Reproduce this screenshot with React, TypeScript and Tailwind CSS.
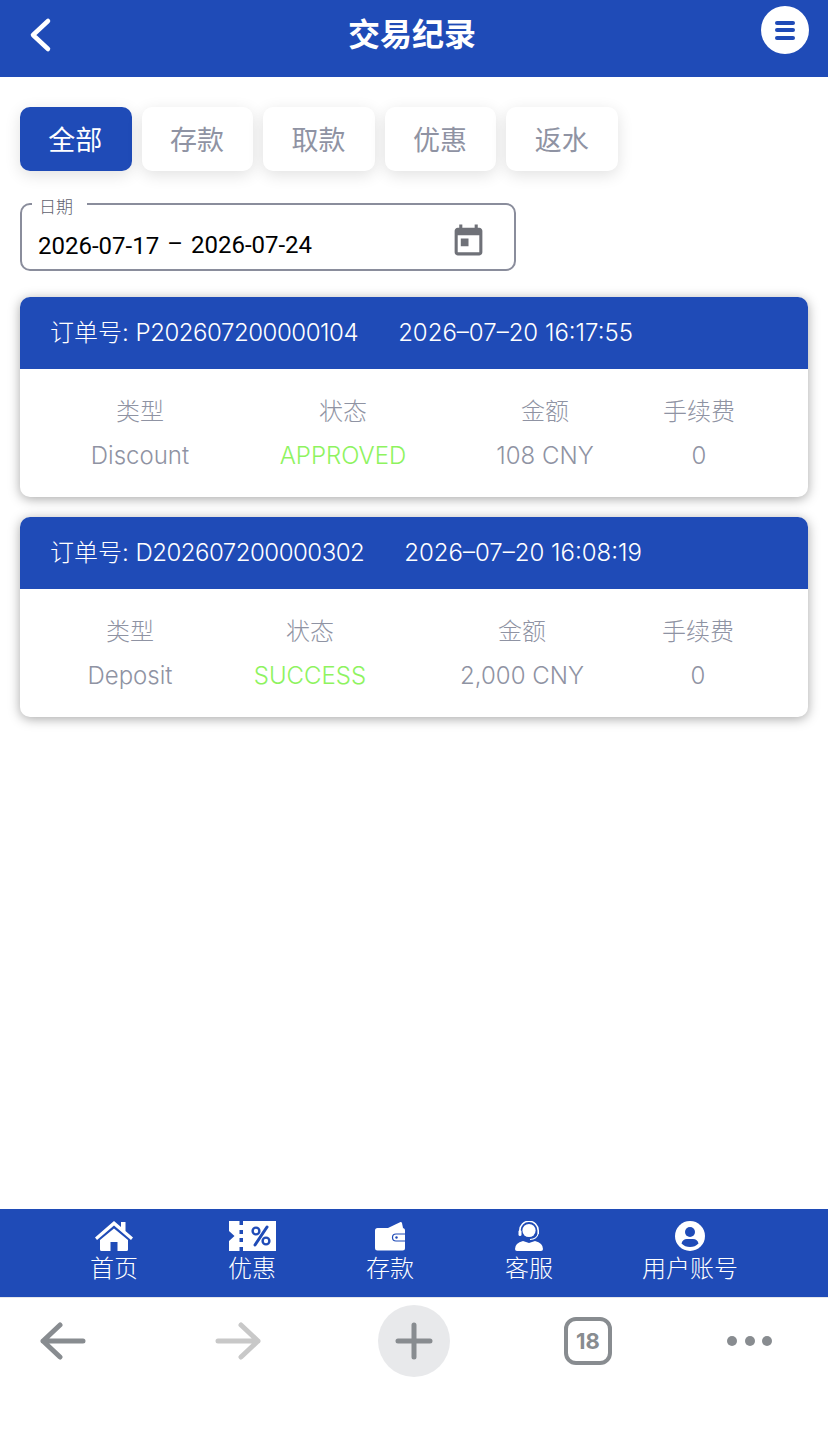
import React from 'react';

const font = "font-['Inter','Noto_Sans_CJK_SC',sans-serif]";

const tabs = ['全部', '存款', '取款', '优惠', '返水'];

const orders = [
  {
    id: 'P202607200000104',
    time: '2026–07–20 16:17:55',
    idClass: 'tracking-[-0.45px]',
    cols: 'grid-cols-[180px_226px_178px_130px]',
    type: 'Discount',
    status: 'APPROVED',
    amount: '108 CNY',
    fee: '0',
  },
  {
    id: 'D202607200000302',
    time: '2026–07–20 16:08:19',
    idClass: 'tracking-[-0.5px]',
    cols: 'grid-cols-[160px_200px_224px_128px]',
    type: 'Deposit',
    status: 'SUCCESS',
    amount: '2,000 CNY',
    fee: '0',
  },
];

const HomeIcon = () => (
  <svg width="38" height="30" viewBox="0 0 38 30" fill="white">
    <path d="M19 0 L26 6 V1 H30.5 V10 L38 16.5 L36 19 L19 4.6 L2 19 L0 16.5 Z" />
    <path d="M19 7.5 L33 19 V28.5 A1.5 1.5 0 0 1 31.5 30 H22.5 V21 H15.5 V30 H6.5 A1.5 1.5 0 0 1 5 28.5 V19 Z" />
  </svg>
);

const TicketIcon = () => (
  <svg width="47" height="30" viewBox="0 0 47 30">
    <path
      fill="white"
      d="M0 0 H10.5 V4 H14 V0 H47 V30 H14 V26 H10.5 V30 H0 V20 L5.5 15 L0 10 Z"
    />
    <rect x="10.5" y="9" width="3.5" height="4" fill="#1f4bb7" />
    <rect x="10.5" y="17" width="3.5" height="4" fill="#1f4bb7" />
    <circle cx="27" cy="10" r="3.4" fill="none" stroke="#1f4bb7" strokeWidth="2.4" />
    <circle cx="37" cy="20" r="3.4" fill="none" stroke="#1f4bb7" strokeWidth="2.4" />
    <path d="M38 6 L26 24" stroke="#1f4bb7" strokeWidth="3" strokeLinecap="round" />
  </svg>
);

const WalletIcon = () => (
  <svg width="30" height="30" viewBox="0 0 30 30" fill="white">
    <path d="M13 7 L25.5 1 Q26.5 0.8 27 2 L28 7 Z" />
    <rect x="0" y="7" width="30" height="22.5" rx="2.5" />
    <path d="M30 13 H21 A3.5 3.5 0 0 0 21 20 H30" fill="white" stroke="#1f4bb7" strokeWidth="1.2" />
    <circle cx="21.5" cy="16.5" r="1.2" fill="#1f4bb7" />
  </svg>
);

const HeadsetIcon = () => (
  <svg width="28" height="30" viewBox="0 0 28 30" fill="none">
    <circle cx="14" cy="9.5" r="6.6" fill="white" />
    <path d="M4.8 13 V9.5 A9.2 9.2 0 0 1 23.2 9.5 V13" stroke="white" strokeWidth="1.6" />
    <rect x="3.5" y="9" width="3" height="6" rx="1.5" fill="white" />
    <path d="M23 13 Q22 18 15 18.5" stroke="white" strokeWidth="1.2" />
    <path fill="white" d="M0 28 Q0 22 8 20 L14 22 L20 20 Q28 22 28 28 Q28 30 26 30 H2 Q0 30 0 28 Z" />
  </svg>
);

const UserIcon = () => (
  <svg width="30" height="30" viewBox="0 0 30 30">
    <circle cx="15" cy="15" r="15" fill="white" />
    <circle cx="15" cy="11" r="5" fill="#1f4bb7" />
    <path fill="#1f4bb7" d="M6.5 22.5 Q7.5 18 12 18 H18 Q22.5 18 23.5 22.5 Q20 26 15 26 Q10 26 6.5 22.5 Z" />
  </svg>
);

const navItems = [
  { label: '首页', icon: <HomeIcon />, cls: 'w-[94px] ml-[67px]' },
  { label: '优惠', icon: <TicketIcon />, cls: 'w-[94px] ml-[44px]' },
  { label: '存款', icon: <WalletIcon />, cls: 'w-[94px] ml-[44px]' },
  { label: '客服', icon: <HeadsetIcon />, cls: 'w-[94px] ml-[45px]' },
  { label: '用户账号', icon: <UserIcon />, cls: 'w-[96px] ml-[66px]' },
];

const Arrow = ({ flip, color }: { flip?: boolean; color: string }) => (
  <svg width="46" height="38" viewBox="0 0 46 38" fill="none" className={flip ? 'rotate-180' : ''}>
    <path d="M20 3 L3 19 L20 35 M3 19 H43" stroke={color} strokeWidth="5" strokeLinecap="round" strokeLinejoin="round" />
  </svg>
);

export default function App() {
  return (
    <div className={`${font} flex h-[1453px] w-[828px] flex-col overflow-hidden bg-white`}>
      {/* header */}
      <div className="relative flex h-[77px] shrink-0 items-center justify-center bg-[#1f4bb7] pb-[7px] pr-[4px]">
        <svg width="24" height="36" viewBox="0 0 24 36" fill="none" className="absolute left-[29px] top-[17px]">
          <path d="M19 4 L4 18 L19 32" stroke="white" strokeWidth="4.5" strokeLinecap="round" strokeLinejoin="round" />
        </svg>
        <span className="text-[32px] font-semibold leading-[40px] text-white">交易纪录</span>
        <div className="absolute left-[761px] top-[6px] flex h-[48px] w-[48px] flex-col items-center justify-center gap-[3.5px] rounded-full bg-white">
          <span className="h-[4px] w-[20px] rounded-full bg-[#1f4bb7]" />
          <span className="h-[4px] w-[20px] rounded-full bg-[#1f4bb7]" />
          <span className="h-[4px] w-[20px] rounded-full bg-[#1f4bb7]" />
        </div>
      </div>

      {/* content */}
      <div className="flex-1 px-[20px] pt-[30px]">
        <div className="flex gap-[10px]">
          {tabs.map((t, i) => (
            <div
              key={t}
              className={`flex h-[64px] w-[111.6px] items-center justify-center rounded-[10px] pt-[4px] pr-[1px] text-[27px] shadow-[0_4px_16px_rgba(0,0,0,0.12)] ${
                i === 0 ? 'bg-[#1f4bb7] text-white' : 'bg-white text-[#8f93a3]'
              }`}
            >
              {t}
            </div>
          ))}
        </div>

        <div className="relative mt-[32px] flex h-[68px] w-[496px] items-center justify-between rounded-[10px] border-2 border-[#8a8d9c] pl-[16px] pr-[27px]">
          <span className="absolute left-[10px] top-[-8px] bg-white pl-[7px] pr-[14px] text-[17px] font-light leading-[20px] text-[#5f6270]">
            日期
          </span>
          <div className="mt-[18px] flex items-center font-['Roboto','Noto_Sans_CJK_SC',sans-serif] text-[24px] leading-[30px] text-black">
            <span>2026-07-17</span>
            <span className="mx-[8px] -translate-y-[2px]">–</span>
            <span className="-translate-y-[1px]">2026-07-24</span>
          </div>
          <svg width="37" height="37" viewBox="0 0 24 24" fill="#6f7178" className="mt-[8px]">
            <path d="M19 3h-1V1h-2v2H8V1H6v2H5c-1.11 0-1.99.9-1.99 2L3 19c0 1.1.89 2 2 2h14c1.1 0 2-.9 2-2V5c0-1.1-.9-2-2-2zm0 16H5V8h14v11zM7 10h5v5H7z" />
          </svg>
        </div>

        <div className="mt-[26px] flex flex-col gap-[20px]">
          {orders.map(o => (
            <div key={o.id} className="h-[200px] overflow-hidden rounded-[10px] bg-white shadow-[0_2px_12px_rgba(0,0,0,0.35)]">
              <div className="flex h-[72px] items-center bg-[#1f4bb7] pl-[30px] text-[24px] font-light text-white">
                <span>
                  订单号: <span className={o.idClass}>{o.id}</span>
                </span>
                <span className="ml-[40px]">{o.time}</span>
              </div>
              <div className={`ml-[30px] grid ${o.cols} gap-y-[14px] pt-[28px] text-center text-[24px] font-light leading-[30px] text-[#8f93a3]`}>
                <span>类型</span>
                <span>状态</span>
                <span>金额</span>
                <span>手续费</span>
                <span>{o.type}</span>
                <span className="text-[#8ef35f]">{o.status}</span>
                <span>{o.amount}</span>
                <span>{o.fee}</span>
              </div>
            </div>
          ))}
        </div>
      </div>

      {/* bottom nav */}
      <div className="flex h-[88px] shrink-0 bg-[#1f4bb7] pt-[12px]">
        {navItems.map(n => (
          <div key={n.label} className={`flex flex-col items-center ${n.cls}`}>
            <div className="flex h-[30px] items-center">{n.icon}</div>
            <span className="mt-[2px] whitespace-nowrap text-[24px] font-light leading-[32px] text-white">{n.label}</span>
          </div>
        ))}
      </div>

      {/* browser toolbar */}
      <div className="flex h-[156px] shrink-0 items-start border-t border-[#e5e7eb] bg-white pl-[40px] pt-[7px]">
        <div className="mt-[17px]">
          <Arrow color="#888c90" />
        </div>
        <div className="ml-[129px] mt-[17px]">
          <Arrow flip color="#c8c8c8" />
        </div>
        <div className="ml-[117px] flex h-[72px] w-[72px] items-center justify-center rounded-full bg-[#e8e9eb]">
          <svg width="38" height="38" viewBox="0 0 38 38" fill="none">
            <path d="M19 3 V35 M3 19 H35" stroke="#888c90" strokeWidth="5" strokeLinecap="round" />
          </svg>
        </div>
        <div className="ml-[114px] mt-[12px] flex h-[48px] w-[48px] items-center justify-center rounded-[12px] border-[4px] border-[#888c90] text-[22px] font-bold text-[#888c90]">
          18
        </div>
        <div className="ml-[115px] mt-[31px] flex gap-[7.5px]">
          <span className="h-[10px] w-[10px] rounded-full bg-[#888c90]" />
          <span className="h-[10px] w-[10px] rounded-full bg-[#888c90]" />
          <span className="h-[10px] w-[10px] rounded-full bg-[#888c90]" />
        </div>
      </div>
    </div>
  );
}
